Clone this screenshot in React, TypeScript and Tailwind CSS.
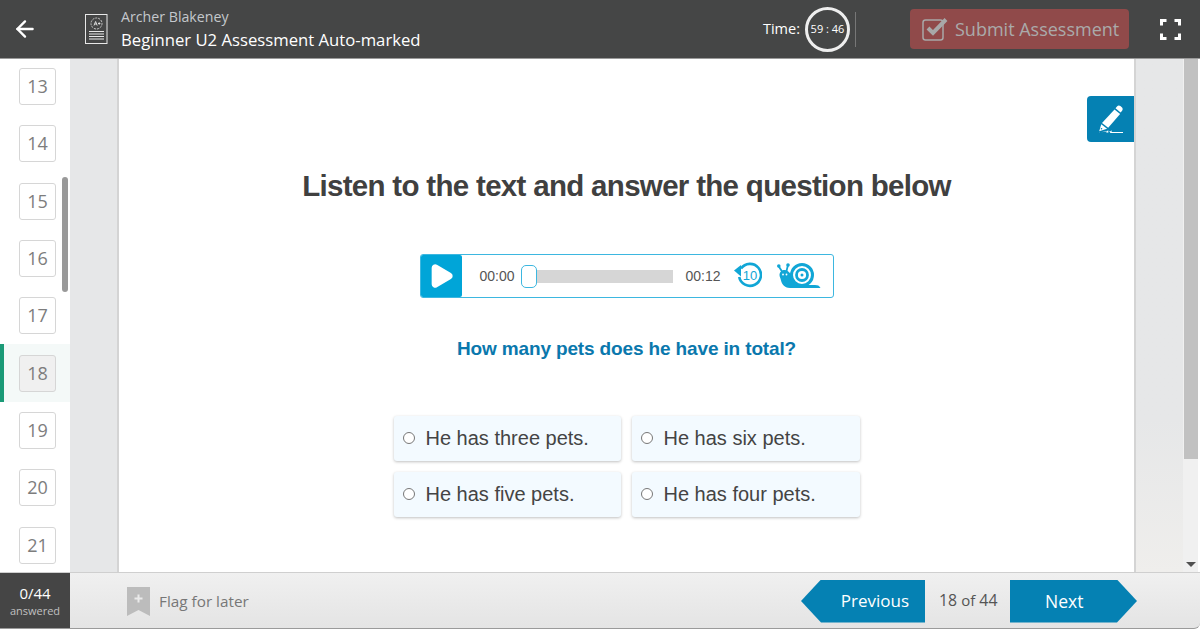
import { ArrowLeft, Play } from 'lucide-react';

const questions = [13, 14, 15, 16, 17, 18, 19, 20, 21];

const options = ['He has three pets.', 'He has six pets.', 'He has five pets.', 'He has four pets.'];

function DocIcon() {
  return (
    <svg width="24" height="31" viewBox="0 0 24 31" fill="none" stroke="#e8e8e8">
      <rect x="1.5" y="0.5" width="21.5" height="29" strokeWidth="1" />
      <circle cx="12.5" cy="9.5" r="5.5" strokeWidth="0.8" strokeDasharray="2 1" />
      <path d="M10 11.500l1.600-4 1.600 4M10.700 10h2M14 9.500h2.400M15.200 8.300v2.400" strokeWidth="0.9" />
      <path d="M5 17.500h15M5 20h15M5 22.500h15M5 25h15" strokeWidth="1" />
    </svg>
  );
}

function FullscreenIcon() {
  return (
    <svg width="21" height="21" viewBox="0 0 21 21" fill="none" stroke="#fff" strokeWidth="3">
      <path d="M1.500 6.500v-5h5M14.500 1.500h5v5M19.500 14.500v5h-5M6.500 19.500h-5v-5" />
    </svg>
  );
}

function PenIcon() {
  return (
    <svg width="30" height="30" viewBox="0 0 30 30" fill="#fff">
      {/* cap */}
      <path d="M19.500 4.300l1.500-1.800c.9-1.100 2.400-1.200 3.400-.4l1.400 1.100c1.100.9 1.200 2.400.3 3.500l-1.500 1.800z" />
      {/* barrel */}
      <path d="M18.500 5.500l5.600 4.600L12.200 23.700 6 19z" />
      <path d="M5.300 20.200l5.800 4.500-7.900 2.600z" />
      <circle cx="5.500" cy="24.800" r="0.8" fill="#0581b3" />
      {/* signature line */}
      <path d="M3 28.800l9.500-2.300-.6 1.500 4-1.400-.4 1.400 11.500.1v.8l-13 0 .4-1.300-4 1.400.5-1.500-7.800 1.100z" />
    </svg>
  );
}

function CheckIcon() {
  return (
    <svg width="27" height="24" viewBox="0 0 27 24" fill="none">
      <rect x="1" y="3" width="20" height="20" rx="2.500" stroke="#a8a8a8" strokeWidth="1.500" />
      <path d="M6 11l5 5L24 2.500" stroke="#a8a8a8" strokeWidth="4" />
    </svg>
  );
}

function ReplayIcon() {
  return (
    <svg width="28" height="28" viewBox="0 0 28 28" fill="none">
      <path d="M7 6.500A11 11 0 1 1 5.200 15" stroke="#11a6d6" strokeWidth="2.600" />
      <path d="M0 8.500L7 3v11.500z" fill="#11a6d6" />
      <text x="16" y="18" textAnchor="middle" fontSize="13" fill="#11a6d6" fontFamily="Liberation Sans, sans-serif">
        10
      </text>
    </svg>
  );
}

function SnailIcon() {
  return (
    <svg width="46" height="28" viewBox="0 0 46 28" fill="none">
      <path d="M1.500 4L6 11M11 3L9 11" stroke="#11a6d6" strokeWidth="1.800" />
      <circle cx="1.800" cy="4" r="1.800" fill="#11a6d6" />
      <circle cx="11" cy="3" r="1.800" fill="#11a6d6" />
      <path d="M2.500 13c0-3 2.500-5 5-5s5.500 2 6.500 5c1 3.500 2 7 5 10h19c3 0 4 .6 5.500 3H13C7 26 4.500 21 4 18.500 3.500 16 2.500 15 2.500 13z" fill="#11a6d6" />
      <circle cx="6" cy="12.500" r="0.900" fill="#fff" />
      <circle cx="9.500" cy="12.500" r="0.900" fill="#fff" />
      <circle cx="25" cy="13" r="10.500" fill="#fff" stroke="#11a6d6" strokeWidth="3" />
      <circle cx="25" cy="13" r="5.500" stroke="#11a6d6" strokeWidth="2.800" />
      <circle cx="25" cy="13" r="1.500" fill="#11a6d6" />
    </svg>
  );
}

function AudioPlayer() {
  return (
    <div className="flex h-[44px] w-[414px] items-center rounded-[3px] border border-[#3db7e0] bg-white">
      <div className="flex h-full w-[41px] items-center justify-center rounded-[2px] bg-[#00a5d8]">
        <Play size={28} fill="#fff" stroke="#fff" strokeLinejoin="round" />
      </div>
      <span className="ml-[18px] text-[14px] text-[#555]">00:00</span>
      <div className="relative ml-[6px] h-[13px] w-[152px] bg-[#d6d6d6]">
        <div className="absolute top-[-5px] left-0 h-[23px] w-[16px] rounded-[5px] border border-[#3db7e0] bg-white" />
      </div>
      <span className="ml-[13px] text-[14px] text-[#555]">00:12</span>
      <div className="ml-[13px] flex">
        <ReplayIcon />
      </div>
      <div className="ml-[15px] flex">
        <SnailIcon />
      </div>
    </div>
  );
}

export default function App() {
  return (
    <div className="flex h-[629px] w-[1200px] flex-col overflow-hidden bg-white font-['Open_Sans',sans-serif]">
      {/* Header */}
      <header className="flex h-[59px] shrink-0 items-center border-b border-[#9a9a9a] bg-[#454646] text-white">
        <div className="ml-[12px] flex w-[72px]">
          <ArrowLeft size={26} strokeWidth={2.200} />
        </div>
        <DocIcon />
        <div className="ml-[13px]">
          <p className="text-[14.200px] leading-[18px] text-[#c4c8cc]">Archer Blakeney</p>
          <p className="mt-[3px] text-[16.700px] leading-[22px]">Beginner U2 Assessment Auto-marked</p>
        </div>
        <div className="ml-auto flex items-center">
          <span className="text-[14.500px]">Time:</span>
          <div className="ml-[5px] flex h-[45px] w-[45px] items-center justify-center rounded-full border-[3px] border-[#eeeeee] text-[11px] whitespace-nowrap">
            59 : 46
          </div>
          <div className="ml-[5px] h-[35px] w-px bg-[#777]" />
          <div className="ml-[54px] flex h-[40px] w-[219px] items-center rounded-[4px] bg-[#904a4a] pl-[12px]">
            <CheckIcon />
            <span className="ml-[6px] text-[18px] text-[#aaaaaa]">Submit Assessment</span>
          </div>
          <div className="mr-[19px] ml-[31px] flex">
            <FullscreenIcon />
          </div>
        </div>
      </header>

      {/* Body */}
      <div className="flex min-h-0 flex-1">
        <aside className="relative w-[70px] shrink-0 overflow-hidden bg-white">
          <div className="mt-[-1px]">
            {questions.map((n) => (
              <div
                key={n}
                className={`flex h-[57.300px] items-center ${n === 18 ? 'border-l-[4px] border-[#1b9a77] bg-[#f4f9f8] pl-[15px]' : 'pl-[19px]'}`}
              >
                <div
                  className={`flex h-[37px] w-[37px] items-center justify-center rounded-[3px] border border-[#d6d6d6] text-[18px] text-[#7d7d7d] ${n === 18 ? 'bg-[#f0f0f0]' : 'bg-white'}`}
                >
                  {n}
                </div>
              </div>
            ))}
          </div>
          <div className="absolute top-[118px] left-[62px] h-[115px] w-[6px] rounded-full bg-[#999]" />
        </aside>

        <div className="w-[49px] shrink-0 border-r-[2px] border-[#d4d4d4] bg-[#e6e7e8]" />

        <main className="relative flex min-w-0 flex-1 flex-col items-center bg-white font-['Liberation_Sans',sans-serif]">
          <div className="absolute top-[37px] right-0 flex h-[46px] w-[47px] items-center justify-center rounded-l-[4px] bg-[#0581b3]">
            <PenIcon />
          </div>
          <h1 className="mt-[108px] text-[29.500px] leading-[38px] font-bold tracking-[-0.69px] text-[#404040]">
            Listen to the text and answer the question below
          </h1>
          <div className="mt-[49px]">
            <AudioPlayer />
          </div>
          <p className="mt-[38px] text-[19px] leading-[26px] font-bold tracking-[-0.14px] text-[#0a78ad]">How many pets does he have in total?</p>
          <div className="mt-[54px] grid grid-cols-[227px_228px] gap-x-[11px] gap-y-[11px]">
            {options.map((o) => (
              <div
                key={o}
                className="flex h-[45px] items-center rounded-[3px] bg-[#f3faff] pb-[1px] pl-[9px] text-[20px] text-[#444] shadow-[0_1px_3px_rgba(0,0,0,0.25)]"
              >
                <span className="h-[12px] w-[12px] rounded-full border-[1.500px] border-[#777] bg-white" />
                <span className="ml-[11px]">{o}</span>
              </div>
            ))}
          </div>
        </main>

        <div className="w-[49px] shrink-0 border-l-[2px] border-[#d4d4d4] bg-gradient-to-b from-[#e6e7e8] from-70% to-[#efeeec]" />

        <div className="flex w-[17px] shrink-0 border-l border-[#f0f0f0] bg-white">
          <div className="relative w-[14px] bg-[#f0f0f0]">
            <div className="h-[400px] w-full bg-[#c1c1c1]" />
            <div className="absolute right-[2px] bottom-[5px] h-0 w-0 border-x-[5px] border-t-[5px] border-x-transparent border-t-[#505050]" />
          </div>
        </div>
      </div>

      {/* Footer */}
      <footer className="flex h-[57px] shrink-0 items-center rounded-br-[6px] border-t border-b border-t-[#cfcfcf] border-b-[#9a9a9a] bg-gradient-to-b from-[#f0f0f0] to-[#e4e4e4]">
        <div className="flex h-full w-[70px] flex-col items-center justify-center bg-[#454545] text-white">
          <span className="text-[15px] leading-[19px]">0/44</span>
          <span className="text-[11px] leading-[15px] text-[#c0c0c0]">answered</span>
        </div>
        <div className="ml-[57px] flex items-center pt-[1px]">
          <svg width="23" height="29" viewBox="0 0 23 29">
            <path d="M0 0h23v29l-11.500-6L0 29z" fill="#bcbcbc" />
            <path d="M11.500 7.500v8M7.500 11.500h8" stroke="#eaeaea" strokeWidth="2" />
          </svg>
          <span className="ml-[9px] text-[15.300px] text-[#777]">Flag for later</span>
        </div>
        <div className="ml-auto flex items-center pt-[1px]">
          <div className="flex h-[43px] w-[124px] items-center justify-end bg-[#0581b3] pr-[16px] text-[17px] text-white [clip-path:polygon(0_50%,20px_0,100%_0,100%_100%,20px_100%)]">
            Previous
          </div>
          <span className="ml-[14px] w-[59px] text-[15.800px] text-[#555]">
            18 <span className="text-[15px]">of</span> 44
          </span>
          <div className="ml-[12px] flex h-[43px] w-[127px] items-center bg-[#0581b3] pl-[35px] text-[17.500px] text-white [clip-path:polygon(0_0,107px_0,100%_50%,107px_100%,0_100%)]">
            Next
          </div>
          <div className="w-[63px]" />
        </div>
      </footer>
    </div>
  );
}
